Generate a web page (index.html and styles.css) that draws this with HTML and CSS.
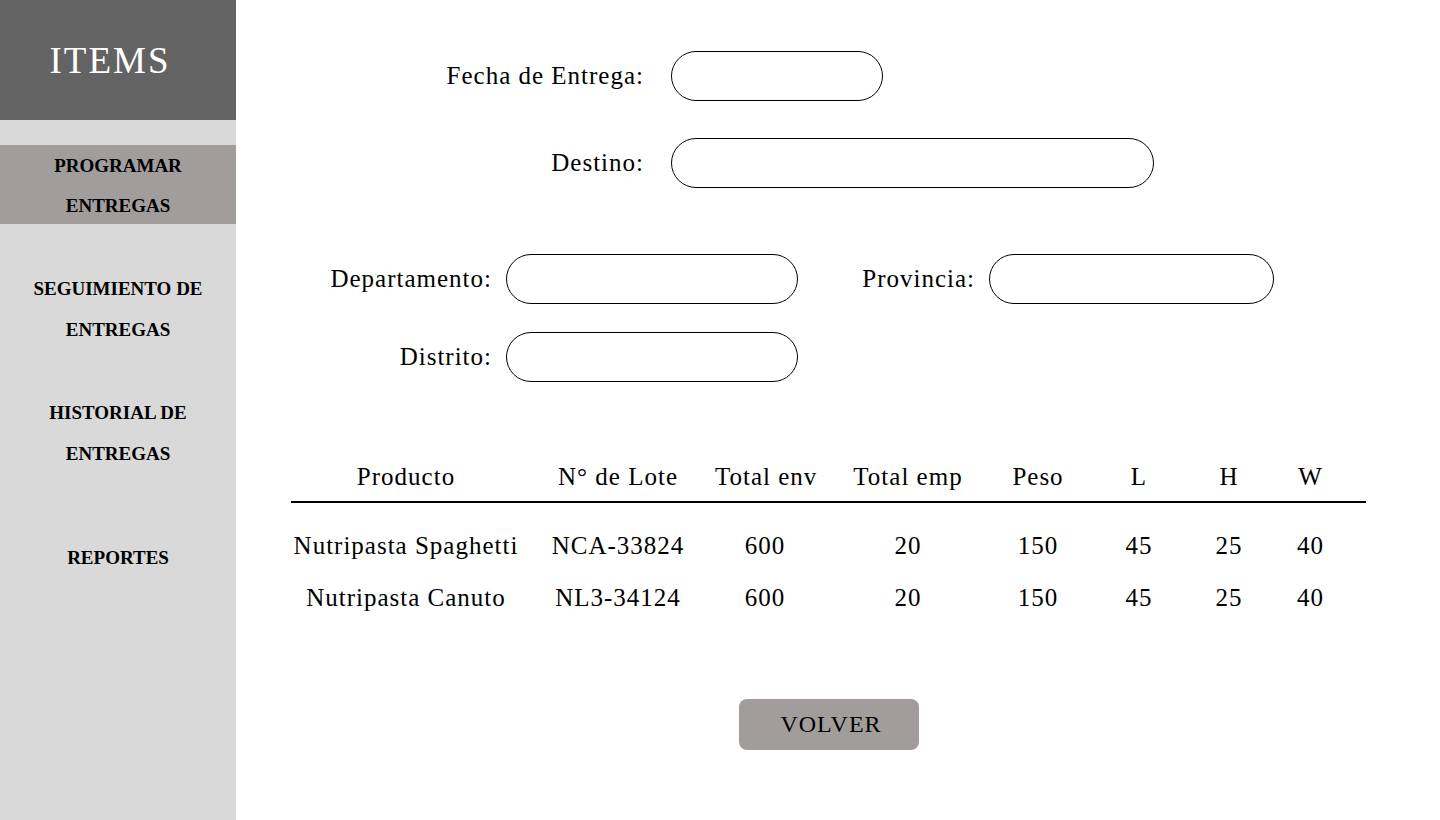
FILE: index.html
```html
<!DOCTYPE html>
<html lang="es">
<head>
    <meta charset="UTF-8">
    <meta name="viewport" content="width=device-width, initial-scale=1.0">
    <title>Programar Entregas</title>
    <link rel="stylesheet" href="styles.css">
</head>
<body>
    <!-- Sidebar -->
    <aside class="sidebar">
        <div class="brand">ITEMS</div>
        <nav class="menu">
            <a class="menu-item active">PROGRAMAR<br>ENTREGAS</a>
            <a class="menu-item">SEGUIMIENTO DE<br>ENTREGAS</a>
            <a class="menu-item">HISTORIAL DE<br>ENTREGAS</a>
            <a class="menu-item last">REPORTES</a>
        </nav>
    </aside>

    <main class="content">
        <!-- Fecha y destino -->
        <div class="form-top">
            <label for="fecha">Fecha de Entrega:</label>
            <input type="text" id="fecha" class="field field-short">
            <label for="destino">Destino:</label>
            <input type="text" id="destino" class="field field-long">
        </div>

        <!-- Ubicacion -->
        <div class="form-location">
            <label for="departamento">Departamento:</label>
            <input type="text" id="departamento" class="field">
            <label for="provincia">Provincia:</label>
            <input type="text" id="provincia" class="field">
            <label for="distrito">Distrito:</label>
            <input type="text" id="distrito" class="field">
        </div>

        <div class="items">
            <table class="items-table">
                <colgroup>
                    <col style="width: 230px">
                    <col style="width: 194px">
                    <col style="width: 100px">
                    <col style="width: 186px">
                    <col style="width: 74px">
                    <col style="width: 128px">
                    <col style="width: 52px">
                    <col style="width: 111px">
                </colgroup>
                <thead>
                    <tr>
                        <th>Producto</th>
                        <th>N° de Lote</th>
                        <th>Total env</th>
                        <th>Total emp</th>
                        <th>Peso</th>
                        <th>L</th>
                        <th>H</th>
                        <th>W</th>
                    </tr>
                </thead>
                <tbody>
                    <tr>
                        <td>Nutripasta Spaghetti</td>
                        <td>NCA-33824</td>
                        <td>600</td>
                        <td>20</td>
                        <td>150</td>
                        <td>45</td>
                        <td>25</td>
                        <td>40</td>
                    </tr>
                    <tr>
                        <td>Nutripasta Canuto</td>
                        <td>NL3-34124</td>
                        <td>600</td>
                        <td>20</td>
                        <td>150</td>
                        <td>45</td>
                        <td>25</td>
                        <td>40</td>
                    </tr>
                </tbody>
            </table>

            <button class="btn-back" type="button">VOLVER</button>
        </div>
    </main>
</body>
</html>
```

FILE: styles.css
```css
* {
    margin: 0;
    padding: 0;
    box-sizing: border-box;
}

body {
    font-family: "Liberation Serif", "DejaVu Serif", serif;
    color: #000;
    background: #fff;
    display: flex;
    min-height: 100vh;
    overflow: hidden;
}

/* Sidebar */
.sidebar {
    width: 236px;
    flex-shrink: 0;
    background: #d9d9d9;
    min-height: 100vh;
}

.brand {
    height: 120px;
    background: #636363;
    color: #fff;
    font-size: 37px;
    letter-spacing: 2px;
    display: flex;
    align-items: center;
    justify-content: center;
    padding-right: 16px;
}

.menu {
    display: flex;
    flex-direction: column;
    gap: 42px;
    padding-top: 25px;
}

.menu-item {
    display: block;
    text-align: center;
    font-weight: bold;
    font-size: 19px;
    line-height: 41px;
    cursor: pointer;
}

.menu-item.active {
    background: #a29d9d;
    height: 79px;
    padding-top: 1px;
    line-height: 40px;
    margin-bottom: 2px;
}

.menu-item.last {
    margin-top: 21px;
}

/* Content */
.content {
    flex: 1;
    padding-top: 51px;
}

label {
    font-size: 25px;
    letter-spacing: 1px;
    text-align: right;
}

.field {
    height: 50px;
    border: 1px solid #000;
    border-radius: 25px;
    background: #fff;
    font-family: inherit;
    font-size: 20px;
    padding: 0 20px;
}

.field:focus {
    outline: none;
}

.form-top {
    display: grid;
    grid-template-columns: 210px auto;
    column-gap: 27px;
    row-gap: 37px;
    align-items: center;
    justify-items: start;
    margin-left: 198px;
}

.form-top label {
    justify-self: end;
}

.field-short {
    width: 212px;
}

.field-long {
    width: 483px;
}

.form-location {
    display: grid;
    grid-template-columns: 172px 292px 163px 285px;
    column-gap: 14px;
    row-gap: 28px;
    align-items: center;
    margin-left: 84px;
    margin-top: 66px;
}

.form-location .field {
    width: 100%;
}

/* Items table */
.items {
    width: 1075px;
    margin-left: 55px;
    margin-top: 80px;
    display: flex;
    flex-direction: column;
    align-items: center;
}

.items-table {
    width: 1075px;
    border-collapse: collapse;
    table-layout: fixed;
    font-size: 25px;
    letter-spacing: 1px;
}

.items-table th,
.items-table td {
    white-space: nowrap;
    text-align: center;
    line-height: 30px;
}

.items-table th {
    font-weight: normal;
    padding-bottom: 9px;
    border-bottom: 2px solid #000;
}

.items-table td {
    padding: 11px 0;
}

.items-table tbody tr:first-child td {
    padding-top: 28px;
}

.btn-back {
    margin-top: 75px;
    width: 180px;
    height: 51px;
    border: none;
    border-radius: 8px;
    background: #a29d9d;
    font-family: inherit;
    font-size: 24px;
    letter-spacing: 1px;
    padding-left: 5px;
    color: #000;
    cursor: pointer;
}
```
